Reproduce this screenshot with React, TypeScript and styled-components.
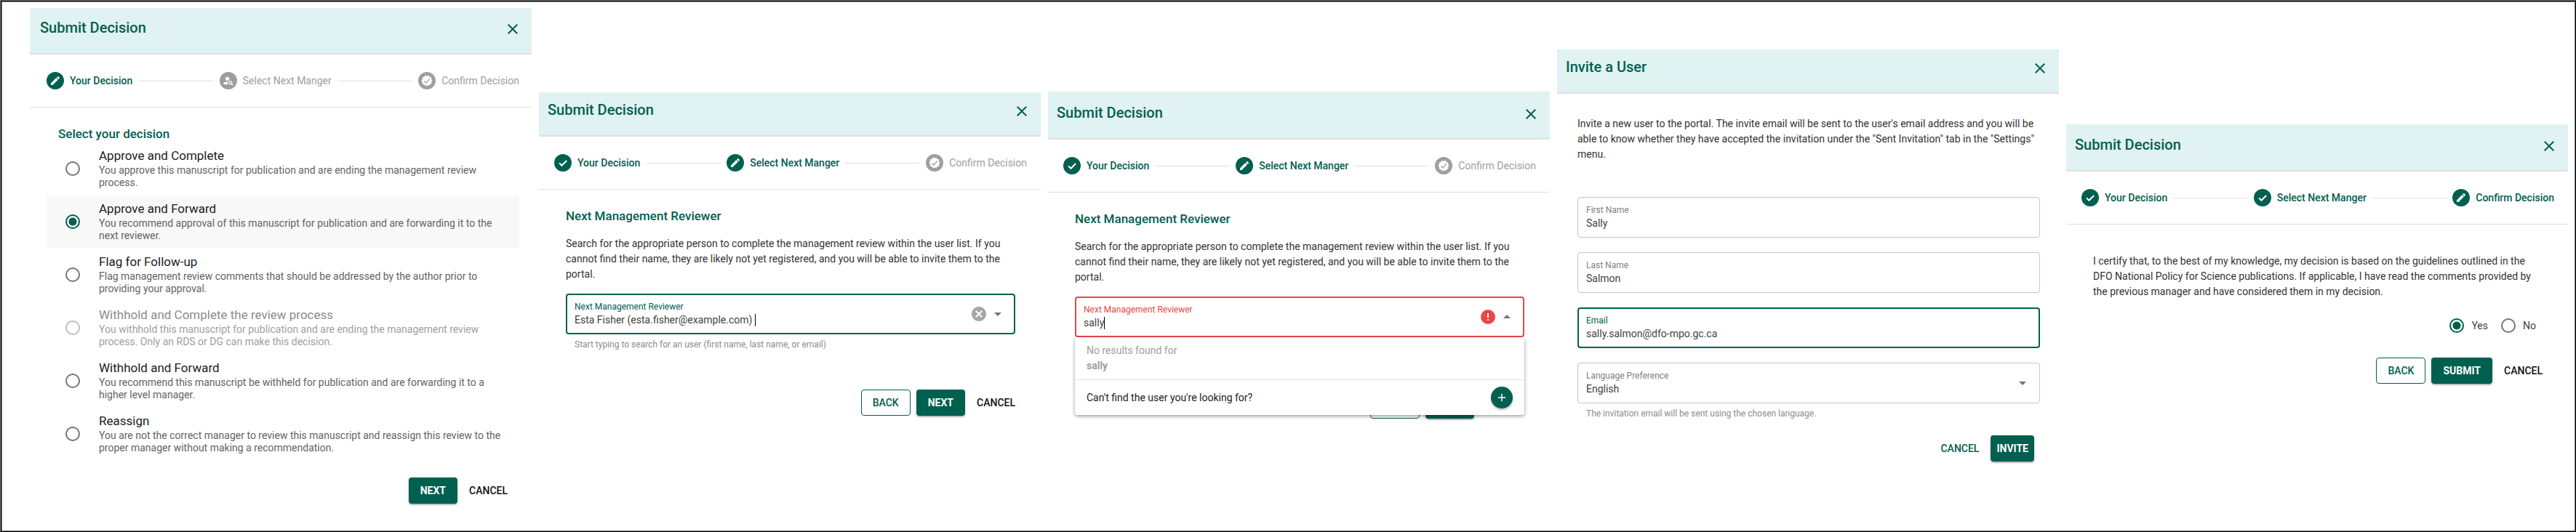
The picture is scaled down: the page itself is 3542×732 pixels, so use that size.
import React from "react";
import styled, { createGlobalStyle, css } from "styled-components";
import { MdPersonSearch, MdClose, MdArrowDropDown, MdArrowDropUp, MdAdd } from "react-icons/md";

const green = "#00604f";
const red = "#eb4747";
const line = "#e0e0e0";

const GlobalStyle = createGlobalStyle`
  *, *::before, *::after { box-sizing: border-box; }
  body { margin: 0; background: #fff; font-family: Roboto, "Liberation Sans", sans-serif; color: #212121; }
  button, input, select { font-family: inherit; margin: 0; }
  h2, h3, p { margin: 0; }
`;

const Board = styled.main`
  display: grid;
  grid-template-columns: repeat(5, 1fr);
  gap: 10px;
  align-items: start;
  min-height: 100vh;
  padding: 10px 10px 24px 40px;
  border: 1px solid;
  border-color: #7a7a7a #000 #000 #7a7a7a;
  box-shadow: inset 1px 1px #000, inset 2px 2px #7a7a7a, inset -1px -1px #6c6c6c;
`;

const Panel = styled.section<{ $top: number; $shift?: number }>`
  --shift: ${p => p.$shift ?? 0}px;
  margin-top: ${p => p.$top}px;
`;

const Header = styled.header<{ $height: number }>`
  display: flex;
  justify-content: space-between;
  align-items: flex-end;
  height: ${p => p.$height}px;
  padding: 0 14px 21px calc(12px + var(--shift));
  background: #e0f2f1;
  border-bottom: 2px solid ${line};
`;

const Title = styled.h2`
  font-size: 20px;
  line-height: 28px;
  font-weight: 500;
  color: ${green};
`;

const IconButton = styled.button`
  display: flex;
  padding: 0;
  border: 0;
  background: none;
  color: ${green};
  font-size: 24px;
`;

const Steps = styled.ol`
  display: flex;
  align-items: center;
  height: 73px;
  margin: 0;
  padding: 0 calc(19px - var(--shift)) 0 calc(21px + var(--shift));
  list-style: none;
  border-bottom: 1px solid ${line};
`;

const Step = styled.li<{ $active: boolean; $last: boolean }>`
  display: flex;
  align-items: center;
  gap: 8px;
  flex: ${p => (p.$last ? "none" : "1 0 auto")};
  font-size: 14px;
  line-height: 20px;
  font-weight: ${p => (p.$active ? 500 : 400)};
  color: ${p => (p.$active ? green : "#9e9e9e")};
  ${p => !p.$last && css`
    &::after { content: ""; flex: 1; height: 1px; background: ${line}; margin-right: 8px; }
  `}
`;

const StepDot = styled.span`
  display: flex;
  align-items: center;
  justify-content: center;
  width: 24px;
  height: 24px;
  border-radius: 50%;
  background: currentColor;
  svg { width: 16px; height: 16px; fill: #fff; }
`;

const Body = styled.div`
  padding: 26px calc(35px - var(--shift)) 0 calc(37px + var(--shift));
`;

const SubHeading = styled.h3`
  font-size: 17px;
  line-height: 20px;
  font-weight: 500;
  color: ${green};
`;

const Text = styled.p<{ $gap: number }>`
  margin-top: ${p => p.$gap}px;
  font-size: 14px;
  line-height: 21px;
  color: #333;
`;

const Options = styled.div`
  display: grid;
  gap: 1px;
  margin: 2px -16px 0 -16px;
`;

const Option = styled.label<{ $selected?: boolean; $disabled?: boolean }>`
  display: flex;
  align-items: center;
  gap: 26px;
  min-height: 72px;
  padding: 0 16px 0 26px;
  background: ${p => (p.$selected ? "#f8f8f8" : "transparent")};
  color: ${p => (p.$disabled ? "#8c8c8c" : "#212121")};
  small { color: ${p => (p.$disabled ? "#a0a0a0" : "#646464")}; }
`;

const OptionText = styled.span`
  padding-bottom: 2px;
`;

const OptionName = styled.span`
  display: block;
  font-size: 17px;
  line-height: 24px;
`;

const OptionNote = styled.small`
  display: block;
  font-size: 14px;
  line-height: 17px;
`;

const Radio = styled.input.attrs({ type: "radio" })`
  appearance: none;
  flex: none;
  width: 20px;
  height: 20px;
  margin: 0;
  border: 2px solid #757575;
  border-radius: 50%;
  &:checked { border-color: ${green}; background: radial-gradient(circle, ${green} 5px, transparent 6px); }
  &:disabled { border-color: #bdbdbd; }
`;

const Actions = styled.div<{ $top: number; $right?: number }>`
  display: flex;
  justify-content: flex-end;
  gap: 8px;
  margin: ${p => p.$top}px ${p => p.$right ?? -8}px 0 0;
`;

const Button = styled.button<{ $kind?: "solid" | "outline" | "text"; $tight?: boolean }>`
  height: 36px;
  padding: 0 ${p => (p.$tight ? 8 : 16)}px;
  border: 0;
  border-radius: 4px;
  background: none;
  font-size: 14px;
  line-height: 20px;
  font-weight: 500;
  color: ${green};
  ${p => p.$kind === "solid" && css`
    background: ${green};
    color: #fff;
    font-weight: 700;
    box-shadow: 0 3px 1px -2px rgba(0,0,0,.2), 0 2px 2px rgba(0,0,0,.14), 0 1px 5px rgba(0,0,0,.12);
  `}
  ${p => p.$kind === "outline" && css`
    padding: 0 15px;
    border: 1px solid ${green};
  `}
  ${p => p.$kind === "text" && css`color: #111;`}
`;

const Field = styled.div<{ $tone?: string }>`
  display: flex;
  align-items: center;
  gap: 2px;
  height: 56px;
  padding: 0 ${p => (p.$tone ? 10 : 11)}px;
  border: ${p => (p.$tone ? `2px solid ${p.$tone}` : "1px solid #c4c4c4")};
  border-radius: 4px;
  color: #757575;
  font-size: 24px;
  label { color: ${p => p.$tone ?? "#808080"}; }
`;

const FieldText = styled.div`
  display: flex;
  flex-direction: column;
  flex: 1;
  label { font-size: 12px; line-height: 16px; }
`;

const control = css`
  width: 100%;
  height: 20px;
  padding: 0;
  border: 0;
  outline: 0;
  appearance: none;
  background: none;
  color: #424242;
  font-size: 14px;
  line-height: 20px;
`;
const Input = styled.input`${control}`;
const Select = styled.select`${control}`;

const Editing = styled.div`
  display: flex;
  align-items: center;
  input { width: auto; field-sizing: content; }
`;

const Caret = styled.span`
  width: 1px;
  height: 17px;
  background: #000;
`;

const Adornment = styled.button<{ $color: string }>`
  display: flex;
  padding: 0;
  border: 0;
  background: none;
  color: ${p => p.$color};
  font-size: 24px;
`;

const Hint = styled.p`
  padding: 4px 12px 0;
  font-size: 12px;
  line-height: 20px;
  color: #8c8c8c;
`;

const Anchor = styled.div`
  position: relative;
  margin-top: 16px;
`;

const Menu = styled.div`
  position: absolute;
  z-index: 1;
  top: 100%;
  left: 0;
  right: 0;
  background: #fff;
  border-radius: 4px;
  box-shadow: 0 2px 4px rgba(0,0,0,.3), 0 1px 6px rgba(0,0,0,.12);
  font-size: 14px;
  line-height: 21px;
`;

const Empty = styled.div`
  padding: 8px 16px;
  color: #9e9e9e;
  border-bottom: 1px solid ${line};
  b { display: block; font-weight: 700; }
`;

const InviteRow = styled.div`
  display: flex;
  align-items: center;
  justify-content: space-between;
  padding: 9px 16px;
`;

const AddButton = styled.button`
  display: flex;
  align-items: center;
  justify-content: center;
  width: 30px;
  height: 30px;
  padding: 0;
  border: 0;
  border-radius: 50%;
  background: ${green};
  color: #fff;
  font-size: 18px;
  box-shadow: 0 2px 3px rgba(0,0,0,.3);
`;

const InviteForm = styled.form`
  padding: 31px 26px 0 28px;
`;

const FieldStack = styled.div`
  display: grid;
  gap: 20px;
  margin-top: 48px;
`;

const Answers = styled.div`
  display: flex;
  justify-content: flex-end;
  gap: 18px;
  margin: 26px 9px 0 0;
`;

const Answer = styled.label`
  display: flex;
  align-items: center;
  gap: 10px;
  font-size: 14px;
  line-height: 20px;
  color: #424242;
`;

const Glyph = styled.svg.attrs({ viewBox: "0 0 24 24", "aria-hidden": true })`
  width: 24px;
  height: 24px;
  fill: currentColor;
`;

const PencilIcon = () => (
  <Glyph>
    <path d="M20.71 7.04c.39-.39.39-1.04 0-1.41l-2.34-2.34c-.37-.39-1.02-.39-1.41 0l-1.84 1.83 3.75 3.75M3 17.25V21h3.75L17.81 9.93l-3.75-3.75L3 17.25z" />
  </Glyph>
);

const CheckIcon = () => (
  <Glyph>
    <path d="M19.8 7.4 9.6 17.6 4.6 12.6" fill="none" stroke="#fff" strokeWidth="3" />
  </Glyph>
);

const BadgeIcon = () => (
  <Glyph viewBox="-2 -2 28 28">
    <path
      strokeLinejoin="round"
      stroke="#fff"
      d="M23 12l-2.44-2.78.34-3.68-3.61-.82-1.89-3.18L12 3 8.6 1.54 6.71 4.72 3.1 5.53l.34 3.68L1 12l2.44 2.78-.34 3.69 3.61.82 1.89 3.18L12 21l3.4 1.46 1.89-3.18 3.61-.82-.34-3.68L23 12z"
    />
    <path d="M6.5 12.8l3.8 3.8 7.4-8.4" fill="none" stroke="#9e9e9e" strokeWidth="2" />
  </Glyph>
);

const ClearIcon = () => (
  <Glyph>
    <path d="M12 2c5.53 0 10 4.47 10 10s-4.47 10-10 10S2 17.53 2 12 6.47 2 12 2m3.59 5L12 10.59 8.41 7 7 8.41 10.59 12 7 15.59 8.41 17 12 13.41 15.59 17 17 15.59 13.41 12 17 8.41 15.59 7z" />
  </Glyph>
);

const AlertIcon = () => (
  <Glyph>
    <path d="M13 13h-2V7h2m0 10h-2v-2h2M12 2a10 10 0 1 0 0 20 10 10 0 0 0 0-20z" />
  </Glyph>
);

const stepNames = ["Your Decision", "Select Next Manger", "Confirm Decision"];
const pendingIcons = [PencilIcon, MdPersonSearch, BadgeIcon];

function Stepper({ current }: { current: number }) {
  return (
    <Steps>
      {stepNames.map((name, i) => {
        const Icon = i < current ? CheckIcon : i === current ? PencilIcon : pendingIcons[i];
        return (
          <Step key={name} $active={i <= current} $last={i === stepNames.length - 1}>
            <StepDot><Icon /></StepDot>
            {name}
          </Step>
        );
      })}
    </Steps>
  );
}

function PanelHeader({ title, height }: { title: string; height: number }) {
  return (
    <Header $height={height}>
      <Title>{title}</Title>
      <IconButton type="button" aria-label="Close"><MdClose /></IconButton>
    </Header>
  );
}

const options = [
  ["Approve and Complete", "You approve this manuscript for publication and are ending the management review process."],
  ["Approve and Forward", "You recommend approval of this manuscript for publication and are forwarding it to the next reviewer."],
  ["Flag for Follow-up", "Flag management review comments that should be addressed by the author prior to providing your approval."],
  ["Withhold and Complete the review process", "You withhold this manuscript for publication and are ending the management review process. Only an RDS or DG can make this decision."],
  ["Withhold and Forward", "You recommend this manuscript be withheld for publication and are forwarding it to a higher level manager."],
  ["Reassign", "You are not the correct manager to review this manuscript and reassign this review to the proper manager without making a recommendation."],
];

function ReviewerIntro() {
  return (
    <>
      <SubHeading>Next Management Reviewer</SubHeading>
      <Text $gap={18}>
        Search for the appropriate person to complete the management review within the user list. If you
        cannot find their name, they are likely not yet registered, and you will be able to invite them to
        the portal.
      </Text>
    </>
  );
}

export default function App() {
  return (
    <>
      <GlobalStyle />
      <Board>
        <Panel $top={0} $shift={2}>
          <PanelHeader title="Submit Decision" height={64} />
          <Stepper current={0} />
          <Body>
            <SubHeading>Select your decision</SubHeading>
            <Options>
              {options.map(([name, note], i) => (
                <Option key={name} $selected={i === 1} $disabled={i === 3}>
                  <Radio name="decision" defaultChecked={i === 1} disabled={i === 3} />
                  <OptionText>
                    <OptionName>{name}</OptionName>
                    <OptionNote>{note}</OptionNote>
                  </OptionText>
                </Option>
              ))}
            </Options>
            <Actions $top={24}>
              <Button type="button" $kind="solid">NEXT</Button>
              <Button type="button" $kind="text" $tight>CANCEL</Button>
            </Actions>
          </Body>
        </Panel>

        <Panel $top={116}>
          <PanelHeader title="Submit Decision" height={61} />
          <Stepper current={1} />
          <Body>
            <ReviewerIntro />
            <Anchor>
              <Field $tone={green}>
                <FieldText>
                  <label htmlFor="reviewer">Next Management Reviewer</label>
                  <Editing>
                    <Input id="reviewer" defaultValue="Esta Fisher (esta.fisher@example.com) " />
                    <Caret />
                  </Editing>
                </FieldText>
                <Adornment type="button" aria-label="Clear" $color="#a6a6a6"><ClearIcon /></Adornment>
                <Adornment type="button" aria-label="Open list" $color="#757575"><MdArrowDropDown /></Adornment>
              </Field>
            </Anchor>
            <Hint>Start typing to search for an user (first name, last name, or email)</Hint>
            <Actions $top={52}>
              <Button type="button" $kind="outline">BACK</Button>
              <Button type="button" $kind="solid">NEXT</Button>
              <Button type="button" $kind="text" $tight>CANCEL</Button>
            </Actions>
          </Body>
        </Panel>

        <Panel $top={115}>
          <PanelHeader title="Submit Decision" height={66} />
          <Stepper current={1} />
          <Body>
            <ReviewerIntro />
            <Anchor>
              <Field $tone={red}>
                <FieldText>
                  <label htmlFor="reviewer-search">Next Management Reviewer</label>
                  <Editing>
                    <Input id="reviewer-search" defaultValue="sally" />
                    <Caret />
                  </Editing>
                </FieldText>
                <Adornment type="button" aria-label="Error" $color={red}><AlertIcon /></Adornment>
                <Adornment type="button" aria-label="Close list" $color="#757575"><MdArrowDropUp /></Adornment>
              </Field>
              <Menu>
                <Empty>No results found for<b>sally</b></Empty>
                <InviteRow>
                  Can't find the user you're looking for?
                  <AddButton type="button" aria-label="Invite user"><MdAdd /></AddButton>
                </InviteRow>
              </Menu>
            </Anchor>
            <Actions $top={76}>
              <Button type="button" $kind="outline">BACK</Button>
              <Button type="button" $kind="solid">NEXT</Button>
              <Button type="button" $kind="text" $tight>CANCEL</Button>
            </Actions>
          </Body>
        </Panel>

        <Panel $top={57}>
          <PanelHeader title="Invite a User" height={61} />
          <InviteForm>
            <Text $gap={0}>
              Invite a new user to the portal. The invite email will be sent to the user's email address and you
              will be able to know whether they have accepted the invitation under the "Sent Invitation" tab in
              the "Settings" menu.
            </Text>
            <FieldStack>
              <Field>
                <FieldText><label htmlFor="first">First Name</label><Input id="first" defaultValue="Sally" /></FieldText>
              </Field>
              <Field>
                <FieldText><label htmlFor="last">Last Name</label><Input id="last" defaultValue="Salmon" /></FieldText>
              </Field>
              <Field $tone={green}>
                <FieldText><label htmlFor="email">Email</label><Input id="email" defaultValue="sally.salmon@dfo-mpo.gc.ca" /></FieldText>
              </Field>
              <Field>
                <FieldText>
                  <label htmlFor="language">Language Preference</label>
                  <Select id="language"><option>English</option></Select>
                </FieldText>
                <MdArrowDropDown />
              </Field>
            </FieldStack>
            <Hint>The invitation email will be sent using the chosen language.</Hint>
            <Actions $top={20} $right={8}>
              <Button type="button" $tight>CANCEL</Button>
              <Button type="button" $kind="solid" $tight>INVITE</Button>
            </Actions>
          </InviteForm>
        </Panel>

        <Panel $top={160}>
          <PanelHeader title="Submit Decision" height={65} />
          <Stepper current={2} />
          <Body>
            <Text $gap={14}>
              I certify that, to the best of my knowledge, my decision is based on the guidelines outlined in the
              DFO National Policy for Science publications. If applicable, I have read the comments provided by
              the previous manager and have considered them in my decision.
            </Text>
            <Answers>
              <Answer><Radio name="certify" defaultChecked />Yes</Answer>
              <Answer><Radio name="certify" />No</Answer>
            </Answers>
            <Actions $top={34}>
              <Button type="button" $kind="outline">BACK</Button>
              <Button type="button" $kind="solid">SUBMIT</Button>
              <Button type="button" $kind="text" $tight>CANCEL</Button>
            </Actions>
          </Body>
        </Panel>
      </Board>
    </>
  );
}
